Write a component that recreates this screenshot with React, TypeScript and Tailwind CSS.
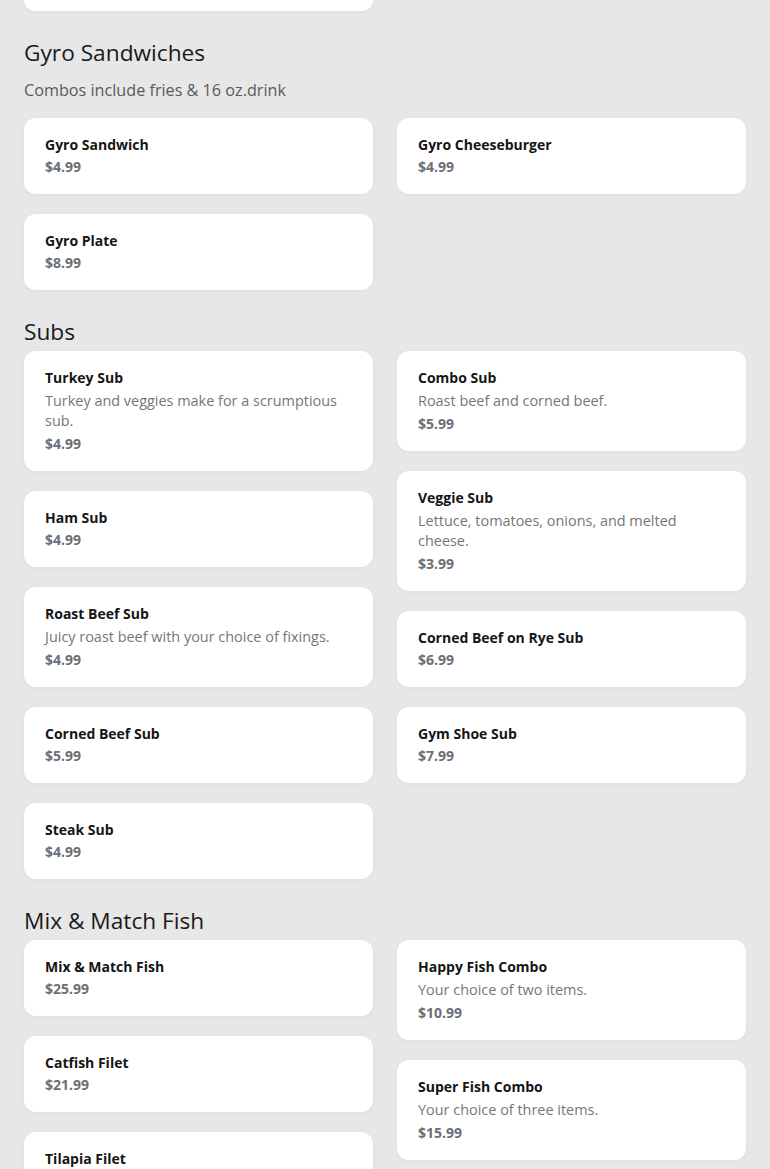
type Item = { name: string; price: string; desc?: string };

type Section = { title: string; note?: string; items: Item[] };

const sections: Section[] = [
  {
    title: 'Gyro Sandwiches',
    note: 'Combos include fries & 16 oz.drink',
    items: [
      { name: 'Gyro Sandwich', price: '$4.99' },
      { name: 'Gyro Cheeseburger', price: '$4.99' },
      { name: 'Gyro Plate', price: '$8.99' },
    ],
  },
  {
    title: 'Subs',
    items: [
      { name: 'Turkey Sub', desc: 'Turkey and veggies make for a scrumptious sub.', price: '$4.99' },
      { name: 'Combo Sub', desc: 'Roast beef and corned beef.', price: '$5.99' },
      { name: 'Ham Sub', price: '$4.99' },
      { name: 'Veggie Sub', desc: 'Lettuce, tomatoes, onions, and melted cheese.', price: '$3.99' },
      { name: 'Roast Beef Sub', desc: 'Juicy roast beef with your choice of fixings.', price: '$4.99' },
      { name: 'Corned Beef on Rye Sub', price: '$6.99' },
      { name: 'Corned Beef Sub', price: '$5.99' },
      { name: 'Gym Shoe Sub', price: '$7.99' },
      { name: 'Steak Sub', price: '$4.99' },
    ],
  },
  {
    title: 'Mix & Match Fish',
    items: [
      { name: 'Mix & Match Fish', price: '$25.99' },
      { name: 'Happy Fish Combo', desc: 'Your choice of two items.', price: '$10.99' },
      { name: 'Catfish Filet', price: '$21.99' },
      { name: 'Super Fish Combo', desc: 'Your choice of three items.', price: '$15.99' },
      { name: 'Tilapia Filet', price: '$19.99' },
      { name: 'Perch Filet', price: '$19.99' },
    ],
  },
];

function MenuCard({ item }: { item: Item }) {
  return (
    <div className="bg-white rounded-xl px-[21px] py-4 shadow-[0_1px_4px_rgba(0,0,0,0.04)] text-sm">
      <div className="font-bold text-[#151515] leading-[22px]">{item.name}</div>
      {item.desc && <div className="text-[14.45px] text-[#76767a] leading-5 my-[2px]">{item.desc}</div>}
      <div className="font-bold text-[#6b6f76] leading-[22px]">{item.price}</div>
    </div>
  );
}

function MenuSection({ section }: { section: Section }) {
  const left = section.items.filter((_, i) => i % 2 === 0);
  const right = section.items.filter((_, i) => i % 2 === 1);
  return (
    <section className="pt-[26px]">
      <h2 className="text-[22.7px] leading-8 text-[#1a1a1a]">{section.title}</h2>
      {section.note && <p className="mt-[9px] text-[16.2px] leading-6 text-[#5a5a5a]">{section.note}</p>}
      <div className={`grid grid-cols-2 gap-6 items-start ${section.note ? 'mt-4' : 'mt-[3px]'}`}>
        <div className="flex flex-col gap-5">
          {left.map((it) => (
            <MenuCard key={it.name} item={it} />
          ))}
        </div>
        <div className="flex flex-col gap-5">
          {right.map((it) => (
            <MenuCard key={it.name} item={it} />
          ))}
        </div>
      </div>
    </section>
  );
}

export default function App() {
  return (
    <div className="h-screen bg-[#e7e7e7] px-6 font-['Open_Sans',sans-serif] overflow-hidden">
      <div className="grid grid-cols-2 gap-6">
        <div className="h-[11px] bg-white rounded-b-xl shadow-[0_1px_4px_rgba(0,0,0,0.04)]" />
      </div>
      {sections.map((s) => (
        <MenuSection key={s.title} section={s} />
      ))}
    </div>
  );
}
